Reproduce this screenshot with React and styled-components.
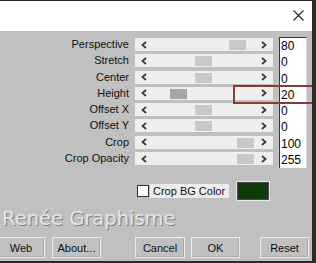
import React from "react";
import styled, { createGlobalStyle } from "styled-components";

const Global = createGlobalStyle`
  html, body { margin: 0; padding: 0; background: #2a2a2a; }
  body { font-family: "Liberation Sans", Arial, sans-serif; }
  * { box-sizing: border-box; }
`;

const Window = styled.div`
  position: relative;
  width: 316px;
  height: 263px;
  border-top: 1px solid #2b2b2b;
  border-right: 4px solid #2b2b2b;
  border-bottom: 2px solid #2b2b2b;
  background: #c0c0c0;
  display: flex;
  flex-direction: column;
  overflow: hidden;
`;

const TitleBar = styled.div`
  height: 30px;
  background: #ffffff;
  display: flex;
  align-items: center;
  justify-content: flex-end;
  padding-right: 8px;
  padding-bottom: 1px;
`;

const Body = styled.div`
  flex: 1;
  display: flex;
  flex-direction: column;
  padding-top: 6px;
`;

const SliderArea = styled.div`
  display: flex;
  align-items: flex-start;
`;

const Column = styled.div`
  display: flex;
  flex-direction: column;
  gap: 3.3px;
  padding-top: ${(p) => p.$top || 0}px;
  margin-left: ${(p) => p.$left || 0}px;
`;

const Label = styled.div`
  width: 129px;
  height: 13px;
  line-height: 13px;
  font-size: 11px;
  color: #111;
  text-align: right;
  white-space: nowrap;
`;

const Track = styled.div`
  position: relative;
  width: 138px;
  height: 13px;
  background: #efefef;
  display: flex;
  align-items: center;
  justify-content: space-between;
  padding: 0 6px;
`;

const Thumb = styled.div`
  position: absolute;
  top: 2px;
  width: 17px;
  height: 10px;
  background: ${(p) => (p.$active ? "#a6a6a6" : "#c8c8c8")};
`;

const ValueBox = styled.div`
  width: 28px;
  margin-left: 6px;
  background: #ffffff;
  border-top: 1px solid #3a3a3a;
  border-left: 1px solid #3a3a3a;
  border-right: 1px solid #d8d8d8;
  display: flex;
  flex-direction: column;
`;

const ValueCell = styled.div`
  height: 16.3px;
  line-height: 16.3px;
  font-size: 12px;
  padding-left: 1px;
  color: #000;
`;

const CheckRow = styled.div`
  display: flex;
  align-items: center;
  margin-top: 13px;
  margin-left: 137px;
  height: 20px;
`;

const CheckBox = styled.div`
  width: 12px;
  height: 12px;
  background: #fff;
  border: 1px solid #333;
`;

const CheckLabel = styled.div`
  width: 79px;
  height: 14px;
  margin-left: 1px;
  background: #ececec;
  font-size: 11px;
  line-height: 14px;
  padding-left: 3px;
  color: #111;
`;

const Swatch = styled.div`
  width: 34px;
  height: 20px;
  margin-left: 7px;
  background: #0e3a0c;
  border: 1px solid #e6e6e6;
  box-shadow: inset 0 0 0 1px #4a4a4a;
`;

const Watermark = styled.div`
  height: 34px;
  line-height: 36px;
  padding-left: 2px;
  font-family: "DejaVu Sans", Verdana, sans-serif;
  font-size: 19.5px;
  color: #e6e6e6;
  text-shadow: 1px 1px 0 #7c7c7c;
  white-space: nowrap;
`;

const ButtonRow = styled.div`
  display: flex;
  margin-top: 2px;
  margin-left: -3px;
  height: 21px;
`;

const Button = styled.div`
  width: ${(p) => p.$w || 49}px;
  margin-left: ${(p) => p.$gap || 0}px;
  height: 21px;
  border: 1px solid #ececec;
  box-shadow: inset -1px -1px 0 #a9a9a9;
  background: #c0c0c0;
  display: flex;
  align-items: center;
  justify-content: center;
  font-size: 11px;
  color: #111;
`;

const Highlight = styled.div`
  position: absolute;
  left: 233px;
  top: 84px;
  width: 84px;
  height: 19px;
  border: 2px solid #8a3a2f;
  pointer-events: none;
`;

const Chevron = ({ dir }) => (
  <svg width="6" height="8" viewBox="0 0 6 8">
    <polyline
      points={dir === "left" ? "5,1 1.5,4 5,7" : "1,1 4.5,4 1,7"}
      fill="none"
      stroke="#3c3c3c"
      strokeWidth="1.8"
    />
  </svg>
);

const CloseIcon = () => (
  <svg width="11" height="11" viewBox="0 0 11 11">
    <path d="M0.5 0.5 L10.5 10.5 M10.5 0.5 L0.5 10.5" stroke="#222" strokeWidth="1.1" />
  </svg>
);

const rows = [
  { label: "Perspective", value: "80", pos: 94 },
  { label: "Stretch", value: "0", pos: 60 },
  { label: "Center", value: "0", pos: 60 },
  { label: "Height", value: "20", pos: 35, active: true },
  { label: "Offset X", value: "0", pos: 60 },
  { label: "Offset Y", value: "0", pos: 60 },
  { label: "Crop", value: "100", pos: 102 },
  { label: "Crop Opacity", value: "255", pos: 102 },
];

export default function App() {
  return (
    <>
      <Global />
      <Window>
        <TitleBar>
          <CloseIcon />
        </TitleBar>
        <Body>
          <SliderArea>
            <Column $top={1}>
              {rows.map((r) => (
                <Label key={r.label}>{r.label}</Label>
              ))}
            </Column>
            <Column $top={1} $left={6}>
              {rows.map((r) => (
                <Track key={r.label}>
                  <Thumb $active={r.active} style={{ left: r.pos }} />
                  <Chevron dir="left" />
                  <Chevron dir="right" />
                </Track>
              ))}
            </Column>
            <ValueBox>
              {rows.map((r) => (
                <ValueCell key={r.label}>{r.value}</ValueCell>
              ))}
            </ValueBox>
          </SliderArea>
          <CheckRow>
            <CheckBox />
            <CheckLabel>Crop BG Color</CheckLabel>
            <Swatch />
          </CheckRow>
          <Watermark>Renée Graphisme</Watermark>
          <ButtonRow>
            <Button $w={48}>Web</Button>
            <Button $gap={7}>About...</Button>
            <Button $gap={34} $w={50}>Cancel</Button>
            <Button $gap={6}>OK</Button>
            <Button $gap={20}>Reset</Button>
          </ButtonRow>
        </Body>
        <Highlight />
      </Window>
    </>
  );
}
